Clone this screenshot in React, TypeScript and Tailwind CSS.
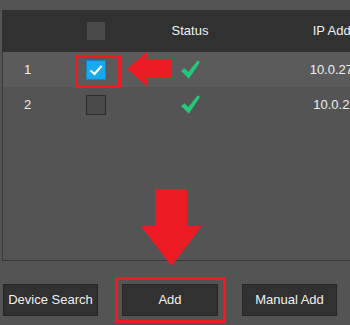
import React from 'react';

const font = { fontFamily: '"Liberation Sans", Arial, sans-serif' };

const GreenCheck: React.FC = () => (
    <svg width="19" height="19" viewBox="0 0 18 18">
        <path d="M0 10.5 L3.5 7.8 L7 11.3 L15.8 0.3 L18 2 L7.5 17.7 Z" fill="#22c97a" />
    </svg>
);

const devices = [
    { id: 1, ip: '10.0.27.101', checked: true },
    { id: 2, ip: '10.0.27.34', checked: false },
];

const App: React.FC = () => {
    return (
        <div className="relative w-[350px] h-[325px] overflow-hidden bg-[#545454] pt-[10px] text-[13px] text-[#f0f0f0]" style={font}>
            {/* device list */}
            <div className="ml-[2px] w-[360px] h-[251px] border-l border-b border-[#3a3a3a]">
                <div className="grid grid-cols-[50px_88px_100px_208px] h-[42px] items-center bg-[#313131] -ml-px">
                    <div />
                    <div className="flex justify-center">
                        <div className="w-[18px] h-[18px] bg-[#4a4a4a]" />
                    </div>
                    <div className="text-center">Status</div>
                    <div className="text-center whitespace-nowrap">IP Address</div>
                </div>
                {devices.map(d => (
                    <div
                        key={d.id}
                        className={`grid grid-cols-[49px_88px_100px_208px] h-[35px] items-center ${d.checked ? 'bg-[#5b5b5b]' : 'bg-[#545454]'}`}
                    >
                        <div className="text-center">{d.id}</div>
                        <div className="flex justify-center">
                            {d.checked ? (
                                <div className="w-[20px] h-[20px] bg-[#19a9ee] border border-[#1486c0] flex items-center justify-center">
                                    <svg width="14" height="12" viewBox="0 0 14 12">
                                        <path d="M1.5 6.5 L5.5 10 L12.5 2" stroke="#fff" strokeWidth="2.2" fill="none" />
                                    </svg>
                                </div>
                            ) : (
                                <div className="w-[20px] h-[20px] bg-[#4a4a4a] border border-[#2c2c2c]" />
                            )}
                        </div>
                        <div className="flex justify-center">
                            <GreenCheck />
                        </div>
                        <div className="text-center whitespace-nowrap">{d.ip}</div>
                    </div>
                ))}
            </div>

            {/* buttons */}
            <div className="flex gap-[24px] pl-[3px] mt-[23px]">
                <button className="w-[95px] h-[32px] bg-[#313131] border border-[#262626] text-[13px] text-[#f0f0f0]">Device Search</button>
                <button className="w-[96px] h-[32px] bg-[#313131] border border-[#262626] text-[13px] text-[#f0f0f0]">Add</button>
                <button className="w-[95px] h-[32px] bg-[#313131] border border-[#262626] text-[13px] text-[#f0f0f0]">Manual Add</button>
            </div>

            {/* annotations */}
            <div className="absolute left-[75px] top-[55px] w-[46px] h-[33px] border-[3px] border-[#ed1c24]" />
            <svg className="absolute left-[126px] top-[50px]" width="46" height="38" viewBox="0 0 46 38">
                <path d="M1 19 L22 1 L22 9 L45 9 L45 28 L22 28 L22 37 Z" fill="#ed1c24" />
            </svg>
            <svg className="absolute left-[141px] top-[189px]" width="62" height="78" viewBox="0 0 62 78">
                <path d="M14 0 L46 0 L46 37 L61 37 L30.5 77 L0 37 L14 37 Z" fill="#ed1c24" />
            </svg>
            <div className="absolute left-[115px] top-[277px] w-[111px] h-[46px] border-[3px] border-[#ed1c24]" />
        </div>
    );
};

export default App;
